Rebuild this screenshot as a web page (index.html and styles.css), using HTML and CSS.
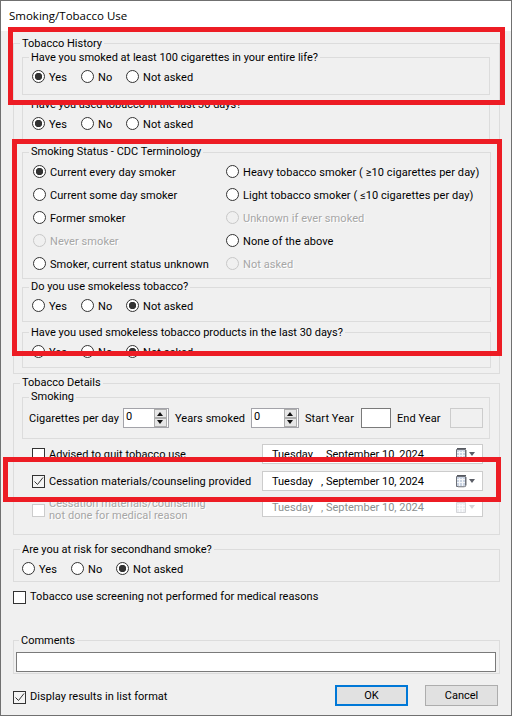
FILE: index.html
```html
<!DOCTYPE html>
<html lang="en">

<head>
    <meta charset="UTF-8">
    <meta name="viewport" content="width=device-width, initial-scale=1.0">
    <title>Smoking/Tobacco Use</title>
    <link rel="stylesheet" href="styles.css">
</head>

<body>

    <div class="window">
        <div class="titlebar">Smoking/Tobacco Use</div>

        <form class="content">

            <fieldset class="group history">
                <legend>Tobacco History</legend>

                <fieldset class="group question first">
                    <legend>Have you smoked at least 100 cigarettes in your entire life?</legend>
                    <div class="yes-no">
                        <label class="opt"><input type="radio" name="smoked100" checked>Yes</label>
                        <label class="opt"><input type="radio" name="smoked100">No</label>
                        <label class="opt"><input type="radio" name="smoked100">Not asked</label>
                    </div>
                </fieldset>

                <fieldset class="group question last30">
                    <legend>Have you used tobacco in the last 30 days?</legend>
                    <div class="yes-no">
                        <label class="opt"><input type="radio" name="used30" checked>Yes</label>
                        <label class="opt"><input type="radio" name="used30">No</label>
                        <label class="opt"><input type="radio" name="used30">Not asked</label>
                    </div>
                </fieldset>

                <fieldset class="group status">
                    <legend>Smoking Status - CDC Terminology</legend>
                    <div class="status-grid">
                        <label class="opt"><input type="radio" name="status" checked>Current every day smoker</label>
                        <label class="opt"><input type="radio" name="status">Heavy tobacco smoker ( ≥10 cigarettes per day)</label>
                        <label class="opt"><input type="radio" name="status">Current some day smoker</label>
                        <label class="opt"><input type="radio" name="status">Light tobacco smoker ( ≤10 cigarettes per day)</label>
                        <label class="opt"><input type="radio" name="status">Former smoker</label>
                        <label class="opt off"><input type="radio" name="status" disabled>Unknown if ever smoked</label>
                        <label class="opt off"><input type="radio" name="status" disabled>Never smoker</label>
                        <label class="opt"><input type="radio" name="status">None of the above</label>
                        <label class="opt"><input type="radio" name="status">Smoker, current status unknown</label>
                        <label class="opt off"><input type="radio" name="status" disabled>Not asked</label>
                    </div>
                </fieldset>

                <fieldset class="group smokeless">
                    <legend>Do you use smokeless tobacco?</legend>
                    <div class="yes-no">
                        <label class="opt"><input type="radio" name="smokeless">Yes</label>
                        <label class="opt"><input type="radio" name="smokeless">No</label>
                        <label class="opt"><input type="radio" name="smokeless" checked>Not asked</label>
                    </div>
                </fieldset>

                <fieldset class="group smokeless30">
                    <legend>Have you used smokeless tobacco products in the last 30 days?</legend>
                    <div class="yes-no">
                        <label class="opt"><input type="radio" name="smokeless30">Yes</label>
                        <label class="opt"><input type="radio" name="smokeless30">No</label>
                        <label class="opt"><input type="radio" name="smokeless30" checked>Not asked</label>
                    </div>
                </fieldset>
            </fieldset>

            <fieldset class="group details">
                <legend>Tobacco Details</legend>

                <fieldset class="group smoking">
                    <legend>Smoking</legend>
                    <div class="smoking-row">
                        <span class="num-label first-label">Cigarettes per day</span>
                        <div class="numbox">0
                            <div class="spin"><span class="spin-up"></span><span class="spin-down"></span></div>
                        </div>
                        <span class="num-label">Years smoked</span>
                        <div class="numbox">0
                            <div class="spin"><span class="spin-up"></span><span class="spin-down"></span></div>
                        </div>
                        <span class="num-label">Start Year</span>
                        <div class="yearbox"></div>
                        <span class="num-label">End Year</span>
                        <div class="yearbox off"></div>
                    </div>
                </fieldset>

                <div class="advice">
                    <div class="check-row">
                        <span class="check"></span>Advised to quit tobacco use
                    </div>
                    <div class="date">
                        <span class="day">Tuesday</span>, September 10, 2024
                        <svg class="cal" width="12" height="13" viewBox="0 0 12 13">
                            <path d="M.5 1.5h9v10h-9z" fill="#c9d3e2" stroke="#6d7078" />
                            <path d="M1 .5h9" stroke="#55585f" fill="none" />
                            <path d="M3.5 3v8M6.5 3v8M1 4.5h8M1 7.5h8" stroke="#f4f6f9" fill="none" />
                            <path d="M10.5 2v8l-2 2H2" stroke="#b5b7bb" fill="none" />
                        </svg>
                        <span class="arrow"></span>
                    </div>

                    <div class="check-row">
                        <span class="check checked"><svg width="11" height="11" viewBox="0 0 11 11"><path d="M1.5 5.5l3 3 5.5-7" fill="none" stroke="#333" /></svg></span>Cessation materials/counseling provided
                    </div>
                    <div class="date">
                        <span class="day">Tuesday</span>, September 10, 2024
                        <svg class="cal" width="12" height="13" viewBox="0 0 12 13">
                            <path d="M.5 1.5h9v10h-9z" fill="#c9d3e2" stroke="#6d7078" />
                            <path d="M1 .5h9" stroke="#55585f" fill="none" />
                            <path d="M3.5 3v8M6.5 3v8M1 4.5h8M1 7.5h8" stroke="#f4f6f9" fill="none" />
                            <path d="M10.5 2v8l-2 2H2" stroke="#b5b7bb" fill="none" />
                        </svg>
                        <span class="arrow"></span>
                    </div>

                    <div class="check-row off two-lines">
                        <span class="check"></span>
                        <span>Cessation materials/counseling<br>not done for medical reason</span>
                    </div>
                    <div class="date off">
                        <span class="day">Tuesday</span>, September 10, 2024
                        <svg class="cal" width="12" height="13" viewBox="0 0 12 13">
                            <path d="M.5 1.5h9v10h-9z" fill="#eceef2" stroke="#d4d5d8" />
                            <path d="M1 .5h9" stroke="#cfd0d3" fill="none" />
                            <path d="M3.5 3v8M6.5 3v8M1 4.5h8M1 7.5h8" stroke="#fafbfc" fill="none" />
                        </svg>
                        <span class="arrow"></span>
                    </div>
                </div>
            </fieldset>

            <fieldset class="group secondhand">
                <legend>Are you at risk for secondhand smoke?</legend>
                <div class="yes-no">
                    <label class="opt"><input type="radio" name="secondhand">Yes</label>
                    <label class="opt"><input type="radio" name="secondhand">No</label>
                    <label class="opt"><input type="radio" name="secondhand" checked>Not asked</label>
                </div>
            </fieldset>

            <div class="check-row screening">
                <span class="check"></span>Tobacco use screening not performed for medical reasons
            </div>

            <fieldset class="group comments">
                <legend>Comments</legend>
                <div class="comment-box"></div>
            </fieldset>

            <div class="footer">
                <div class="check-row">
                    <span class="check checked"><svg width="11" height="11" viewBox="0 0 11 11"><path d="M1.5 5.5l3 3 5.5-7" fill="none" stroke="#333" /></svg></span>Display results in list format
                </div>
                <button type="button" class="btn default">OK</button>
                <button type="button" class="btn">Cancel</button>
            </div>

        </form>

        <!-- red boxes drawn on top of the dialog -->
        <div class="mark mark-history"></div>
        <div class="mark mark-status"></div>
        <div class="mark mark-cessation"></div>
    </div>

</body>

</html>
```

FILE: styles.css
```css
body {
    margin: 0;
    font-family: Roboto, "Noto Sans", sans-serif;
    font-size: 11px;
    color: #000;
    background-color: #f0f0f0;
}

.window {
    position: relative;
    box-sizing: border-box;
    width: 512px;
    height: 716px;
    border: 1px solid #707070;
    background-color: #f0f0f0;
    overflow: hidden;
}

.titlebar {
    height: 30px;
    line-height: 30px;
    padding-left: 8px;
    font-family: "Open Sans", sans-serif;
    font-size: 11.5px;
    background-color: #fff;
}

.content {
    padding: 4px 11px 0 12px;
}

/* group boxes */
fieldset.group {
    box-sizing: border-box;
    min-width: 0;
    margin: 0;
    padding: 0 8px;
    border: 1px solid #dcdcdc;
}

legend {
    margin-left: -2px;
    padding: 0 2px;
    height: 16px;
    line-height: 16px;
    white-space: nowrap;
}

.history {
    height: 339px;
}

.question {
    height: 46px;
    margin-right: 1px !important;
}

.question legend,
.smokeless30 legend,
.secondhand legend,
.comments legend,
.history > legend {
    line-height: 17px;
}

.question.first {
    margin-top: -2px !important;
}

.question.last30 {
    margin-top: 1px !important;
}

.status {
    height: 135px;
    margin-top: 2px !important;
}

.smokeless {
    height: 43px;
}

.smokeless30 {
    height: 44px;
    margin-top: 2px !important;
}

.details {
    height: 160px;
    margin-top: 1px !important;
}

.smoking {
    height: 50px;
    margin: -2px 1px 0 0 !important;
}

.secondhand {
    height: 41px;
    margin-top: 6px !important;
}

.comments {
    height: 42px;
    margin-top: 28px !important;
    padding: 0 3px 0 2px !important;
}

.comments legend {
    margin-left: 3px;
}

/* radios */
.opt {
    display: flex;
    align-items: flex-start;
    gap: 4px;
    height: 13px;
    line-height: 15px;
    letter-spacing: 0.07px;
    white-space: nowrap;
}

.opt input {
    appearance: none;
    flex: none;
    width: 13px;
    height: 13px;
    margin: 0;
    border: 1px solid #333;
    border-radius: 50%;
    background-color: #fff;
}

.opt input:checked {
    background: radial-gradient(circle, #333 3.4px, #fff 4px);
}

.opt.off input {
    border-color: #c8c8c8;
    background-color: #f0f0f0;
}

.off {
    color: #a6a6a6;
    text-shadow: 1px 1px 0 #fff;
}

.yes-no {
    display: grid;
    grid-template-columns: 49px 45px auto;
    padding: 5px 0 0 1px;
}

.smokeless .yes-no {
    padding-top: 4px;
}

.secondhand .yes-no {
    padding-left: 0;
}

.status-grid {
    display: grid;
    grid-template-columns: 193px auto;
    row-gap: 10px;
    padding: 5px 0 0 2px;
}

/* smoking row */
.smoking-row {
    display: grid;
    grid-template-columns: 94px 46px 82px 48px 62px 30px 59px 33px;
    align-items: center;
    height: 20px;
    margin-left: -2px;
    padding-top: 3px;
}

.num-label {
    padding: 1px 0 0 6px;
    letter-spacing: 0.07px;
    white-space: nowrap;
}

.first-label {
    padding-left: 0;
}

.numbox {
    position: relative;
    box-sizing: border-box;
    height: 20px;
    padding-left: 2px;
    line-height: 15px;
    background-color: #fff;
    border: 1px solid #a3a3a9;
}

.spin {
    position: absolute;
    top: 0;
    right: 1px;
    display: flex;
    flex-direction: column;
    width: 13px;
}

.spin span {
    position: relative;
    box-sizing: border-box;
    height: 9px;
    background-color: #e6e6e6;
    border: 1px solid #adadad;
}

.spin span::after {
    content: "";
    position: absolute;
    left: 2px;
    border-left: 3.5px solid transparent;
    border-right: 3.5px solid transparent;
}

.spin-up::after {
    top: 2px;
    border-bottom: 4px solid #111;
}

.spin-down::after {
    top: 1px;
    border-top: 4px solid #111;
}

.yearbox {
    box-sizing: border-box;
    height: 20px;
    background-color: #fff;
    border: 1px solid #7a7a7a;
}

.yearbox.off {
    background-color: #f0f0f0;
    border-color: #ccc;
}

/* advice rows */
.advice {
    display: grid;
    grid-template-columns: 230px 221px;
    grid-template-rows: 27px 26px 20px;
    padding: 5px 0 0 10px;
}

.check-row {
    display: flex;
    align-items: flex-start;
    gap: 4px;
    height: 13px;
    line-height: 11px;
    letter-spacing: 0.05px;
    white-space: nowrap;
}

.advice .check-row {
    margin-top: 4px;
    line-height: 13px;
}

.check {
    box-sizing: border-box;
    flex: none;
    width: 13px;
    height: 13px;
    border: 1px solid #333;
    background-color: #fff;
    line-height: 0;
}

.check.checked {
    background-color: #f4f4f4;
}

.advice .two-lines {
    height: 24px;
    margin-top: 1px;
    line-height: 12px;
}

.two-lines .check {
    margin-top: 6px;
    border-color: #ccc;
}

.date {
    position: relative;
    box-sizing: border-box;
    height: 20px;
    padding-left: 9px;
    line-height: 19px;
    white-space: nowrap;
    background-color: #fff;
    border: 1px solid #ccc;
}

.date.off {
    color: #8b9090;
    text-shadow: none;
}

.day {
    display: inline-block;
    width: 49px;
}

.cal {
    position: absolute;
    top: 3px;
    left: 193px;
}

.arrow {
    position: absolute;
    top: 7px;
    left: 206px;
    border-left: 3.5px solid transparent;
    border-right: 3.5px solid transparent;
    border-top: 4px solid #5a5d66;
}

.date.off .arrow {
    border-top-color: #d4d5d8;
}

/* bottom part */
.screening {
    margin-top: 9px;
}

.comment-box {
    box-sizing: border-box;
    height: 20px;
    margin-top: 4px;
    background-color: #fff;
    border: 1px solid #7a7a7a;
}

.footer {
    display: flex;
    align-items: flex-start;
    gap: 17px;
    margin: 11px 2px 0 0;
}

.footer .check-row {
    flex: 1;
    margin-top: 6px;
}

.btn {
    box-sizing: border-box;
    width: 73px;
    height: 21px;
    padding: 0;
    font: inherit;
    color: #000;
    background-color: #e1e1e1;
    border: 1px solid #adadad;
}

.btn.default {
    border: 2px solid #0078d7;
}

/* red annotation boxes */
.mark {
    position: absolute;
    box-sizing: border-box;
    border: 5px solid #ed1c24;
}

.mark-history {
    left: 7px;
    top: 26px;
    width: 497px;
    height: 78px;
}

.mark-status {
    left: 11px;
    top: 138px;
    width: 490px;
    height: 217px;
}

.mark-cessation {
    left: 2px;
    top: 456px;
    width: 498px;
    height: 45px;
}
```
